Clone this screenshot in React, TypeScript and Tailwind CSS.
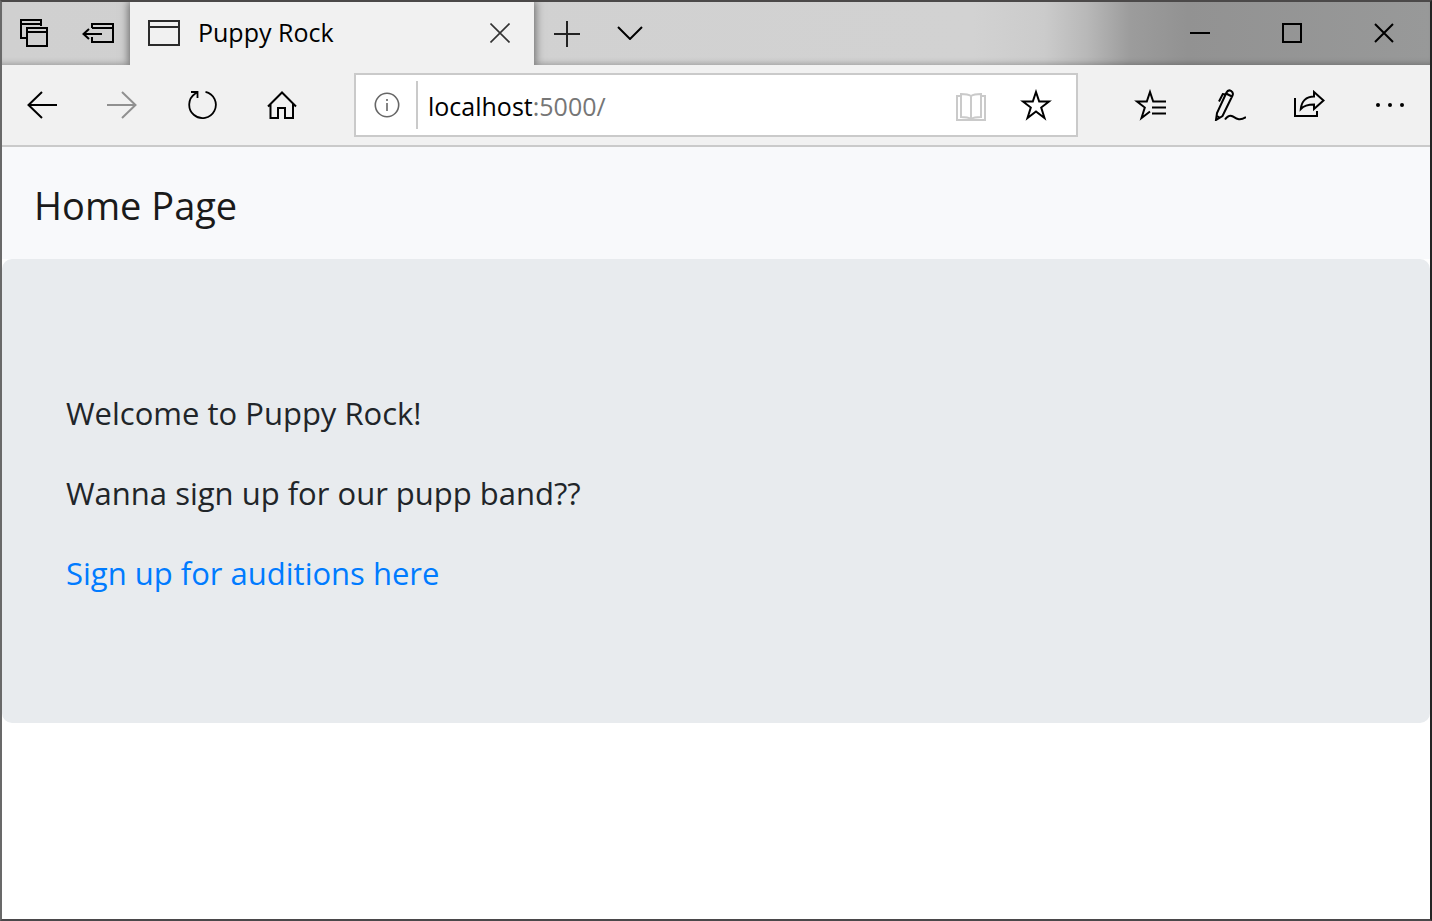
import type { ReactNode } from "react";

function Icon({ w, h, sw = 2, className = "", children }: { w: number; h: number; sw?: number; className?: string; children: ReactNode }) {
  return (
    <svg width={w} height={h} viewBox={`0 0 ${w} ${h}`} fill="none" stroke="currentColor" strokeWidth={sw} className={`shrink-0 ${className}`} aria-hidden="true">
      {children}
    </svg>
  );
}

function BarButton({ label, className, disabled, children }: { label: string; className: string; disabled?: boolean; children: ReactNode }) {
  return (
    <button type="button" aria-label={label} disabled={disabled} className={`flex shrink-0 items-center justify-center ${className}`}>
      {children}
    </button>
  );
}

function TitleBar() {
  return (
    <header className="flex h-[63px] bg-[linear-gradient(90deg,#d0d0d0_0%,#d2d2d2_68%,#cbcbcb_73%,#b8b8b8_76%,#9c9c9c_79%,#929292_83%,#989999_100%)] shadow-[inset_0_-6px_6px_-5px_rgba(0,0,0,0.28)]">
      <BarButton label="Tabs you've set aside" className="h-full w-16 pb-0.5">
        <Icon w={28} h={28}>
          <path d="M7 19H1V1H21V7M1 5H21M7 9H27V27H7ZM7 13H27" />
        </Icon>
      </BarButton>
      <BarButton label="Set these tabs aside" className="h-full w-16 pb-0.5">
        <Icon w={32} h={22}>
          <path d="M10 6V2H31V20H10V15M10 6H31M1 12H20M7 7L1.500 12L7 17" />
        </Icon>
      </BarButton>
      <div className="z-10 flex w-[404px] items-center bg-[#f1f1f1] pr-4 pb-0.5 pl-[18px] shadow-[0_0_9px_1px_rgba(0,0,0,0.55)] [clip-path:inset(0_-14px_0_-14px)]">
        <Icon w={32} h={26} className="text-[#2b2b2b]">
          <path d="M1 1H31V25H1ZM1 7H31" />
        </Icon>
        <span className="grow truncate pb-0.5 pl-[18px] text-[25px] leading-8 text-black">Puppy Rock</span>
        <BarButton label="Close tab" className="size-9 text-[#333]">
          <Icon w={20} h={20}>
            <path d="M0.5 0.5L19.5 19.5M19.5 0.5L0.5 19.5" strokeWidth="1.6" />
          </Icon>
        </BarButton>
      </div>
      <BarButton label="New tab" className="h-full w-16 pl-0.5 text-[#222]">
        <Icon w={26} h={26}>
          <path d="M13 0V26M0 13H26" />
        </Icon>
      </BarButton>
      <BarButton label="Show tab previews" className="h-full w-16 pb-0.5">
        <Icon w={26} h={14}>
          <path d="M1 1L13 13L25 1" />
        </Icon>
      </BarButton>
      <div className="grow" />
      <BarButton label="Minimize" className="h-full w-[92px] pb-0.5">
        <Icon w={20} h={20}>
          <path d="M0 10H20" />
        </Icon>
      </BarButton>
      <BarButton label="Maximize" className="h-full w-[92px] pb-0.5">
        <Icon w={20} h={20}>
          <path d="M1 1H19V19H1Z" />
        </Icon>
      </BarButton>
      <BarButton label="Close" className="h-full w-[92px] pb-0.5">
        <Icon w={20} h={20}>
          <path d="M1 1L19 19M19 1L1 19" />
        </Icon>
      </BarButton>
    </header>
  );
}

function Toolbar() {
  return (
    <nav aria-label="Browser" className="flex h-[82px] items-center border-b-2 border-[#cacaca] bg-[#f1f1f1] text-black">
      <BarButton label="Back" className="h-full w-20">
        <Icon w={30} h={28}>
          <path d="M1 14H30M15 1L1.500 14L15 27" />
        </Icon>
      </BarButton>
      <BarButton label="Forward" disabled className="h-full w-20 text-[#909090]">
        <Icon w={30} h={28}>
          <path d="M0 14H29M15 1L28.500 14L15 27" />
        </Icon>
      </BarButton>
      <BarButton label="Refresh" className="h-full w-20">
        <Icon w={30} h={30} sw={1.8}>
          <path d="M18.500 1.800A13.300 13.300 0 1 1 8 3.800L10.500 2M4 2H10.500V8" />
        </Icon>
      </BarButton>
      <BarButton label="Home" className="h-full w-20">
        <Icon w={30} h={28}>
          <path d="M1 15.500L15 1.500L29 15.500M3.500 13V27H11V17H18V27H26V13" />
        </Icon>
      </BarButton>
      <div className="ml-8 flex h-16 min-w-0 grow items-center border-2 border-[#cacaca] bg-white pl-[18px]">
        <BarButton label="Site information" className="size-[26px] text-[#666]">
          <Icon w={26} h={26} sw={1.6}>
            <circle cx="13" cy="13" r="11.700" />
            <path d="M13 11V19M13 7V9" />
          </Icon>
        </BarButton>
        <span className="ml-4 h-12 w-0.5 shrink-0 bg-[#cacaca]" />
        <span role="textbox" aria-label="Address" className="grow truncate pt-0.5 pl-[10px] text-[25px] leading-8 text-[#767676]">
          <span className="text-black">localhost</span>:5000/
        </span>
        <BarButton label="Reading view" disabled className="h-full w-16 pt-1 pr-0.5 text-[#cacaca]">
          <Icon w={30} h={28}>
            <path d="M4 3H1V27H29V3H26M15 3V26M15 3C12 1 9 1 5 1V24C9 24 12 24 15 26C18 24 21 24 25 24V1C21 1 18 1 15 3" />
          </Icon>
        </BarButton>
        <BarButton label="Add to favorites" className="mr-2 h-full w-16">
          <Icon w={32} h={32}>
            <path d="M16 3L19.200 12.500H29L21.200 18.500L24.500 29L16 22.500L7.500 29L10.800 18.500L3 12.500H12.800Z" />
          </Icon>
        </BarButton>
      </div>
      <div className="ml-8 flex h-full shrink-0">
        <BarButton label="Favorites" className="h-full w-20">
          <Icon w={32} h={32}>
            <path d="M32 12.500H19.200L16 3L12.800 12.500H3L10.800 18.500L7.500 29L16 22.500M18 18.500H32M18 24.500H32" />
          </Icon>
        </BarButton>
        <BarButton label="Add notes" className="h-full w-20">
          <Icon w={32} h={32}>
            <path d="M2 31L3 24L12.500 3.500Q14 .500 17 1.800Q19.800 3.500 18.500 6.500L8.500 27ZM12 4.500L18 7.500M12.500 5.500L8.800 5L5 12.500M3 27L5.500 28.500M11 30.500C14 26.500 16 26 19 27.500C23 30 26 32 32 28" />
          </Icon>
        </BarButton>
        <BarButton label="Share" className="h-full w-20">
          <Icon w={32} h={30}>
            <path d="M1 8V26H23V21M20 2L29.500 10.500L20 19V14.500C14 14.500 10 15.500 6.800 19C7.500 11.500 12 6.500 20 6.500Z" />
          </Icon>
        </BarButton>
        <BarButton label="Settings and more" className="h-full w-20">
          <Icon w={30} h={6}>
            <g fill="currentColor" stroke="none">
              <circle cx="3" cy="3" r="2" />
              <circle cx="15" cy="3" r="2" />
              <circle cx="27" cy="3" r="2" />
            </g>
          </Icon>
        </BarButton>
      </div>
    </nav>
  );
}

export default function App() {
  return (
    <div className="flex min-h-screen flex-col border-2 border-t-[#4b4949] border-r-[#242424] border-b-[#4a484a] border-l-[#696969] bg-white font-['Open_Sans','Noto_Sans',sans-serif]">
      <TitleBar />
      <Toolbar />
      <main>
        <div className="flex h-28 items-center bg-[#f8f9fb] px-8 pt-1">
          <h1 className="text-[38px] leading-[60px] text-[#1a1a1a]">Home Page</h1>
        </div>
        <section className="flex flex-col gap-8 rounded-[10px] bg-[#e8ebee] px-16 pt-[130px] pb-[126px] text-[31px] leading-[48px] text-[#212529]">
          <p>Welcome to Puppy Rock!</p>
          <p>Wanna sign up for our pupp band??</p>
          <p>
            <a href="#auditions" className="text-[#007bff]">Sign up for auditions here</a>
          </p>
        </section>
      </main>
    </div>
  );
}
